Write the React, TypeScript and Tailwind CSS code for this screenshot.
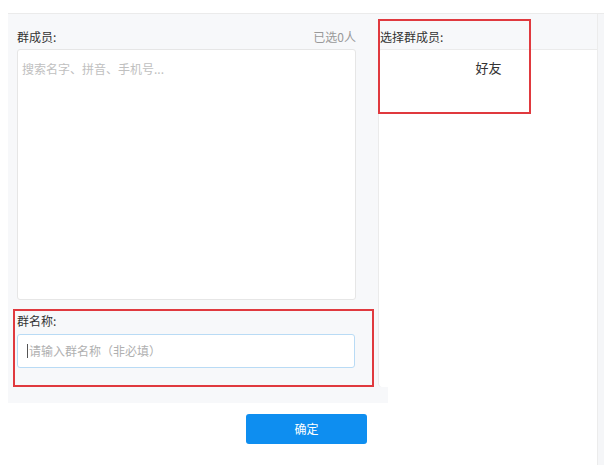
import React from 'react';

const font = { fontFamily: '"Noto Sans CJK SC", "Noto Sans", sans-serif' };

export default function App() {
  return (
    <div
      className="relative w-[604px] h-[465px] bg-white overflow-hidden text-[12px] text-[#333]"
      style={font}
    >
      <div className="h-[13px]" />
      <div className="ml-[8px] flex h-[452px] border-t border-[#ebebeb]">
        {/* left column */}
        <div className="w-[380px] flex flex-col">
          <div className="h-[389px] bg-[#f7f8fa] pl-[9px] flex flex-col">
            <div className="h-[35px] pt-[10px] pr-[32px] flex items-center justify-between">
              <span>群成员:</span>
              <span className="text-[#999]">已选0人</span>
            </div>
            <div className="w-[339px] h-[251px] bg-white border border-[#e6e6e6] rounded-[3px] px-[4px] pt-[10px] text-[#c0c0c0] leading-[18px]">
              搜索名字、拼音、手机号...
            </div>
            <div className="mt-[14px] h-[14px] flex items-center">群名称:</div>
            <div className="mt-[6px] w-[338px] h-[34px] bg-white border border-[#b9dbf5] rounded-[3px] flex items-center pl-[9px] text-[#b0b0b0]">
              <span className="w-px h-[14px] bg-[#555] mr-px" />
              请输入群名称（非必填）
            </div>
          </div>
          <button className="ml-[238px] mt-[11px] w-[121px] h-[30px] rounded-[3px] bg-[#0e8ef0] text-white text-[12px]">
            确定
          </button>
        </div>
        {/* right column */}
        <div className="flex-1 flex">
          <div className="w-[209px] flex flex-col">
            <div className="h-[35px] bg-[#f7f8fa] pt-[10px] flex items-center">
              <span className="-ml-[8px]">选择群成员:</span>
            </div>
            <div className="h-[338px] bg-white border-t border-[#ebebeb] flex justify-center pt-[9px] pr-[8px]">
              <span className="text-[13px] leading-[18px] h-[18px]">好友</span>
            </div>
          </div>
          <div className="flex-1 bg-[#f5f6f8] border-l border-[#ececec]" />
        </div>
      </div>

      {/* box left edge overlapping the grey panel */}
      <div className="absolute left-[378px] top-[49px] w-[10px] h-[338px] bg-white border-l border-t border-[#ebebeb] rounded-tl-[3px] rounded-bl-[4px]" />

      {/* annotation boxes */}
      <div className="absolute left-[378px] top-[19px] w-[153px] h-[95px] border-2 border-[#e0393e] pointer-events-none" />
      <div className="absolute left-[13px] top-[309px] w-[361px] h-[78px] border-2 border-[#e0393e] pointer-events-none" />
    </div>
  );
}
